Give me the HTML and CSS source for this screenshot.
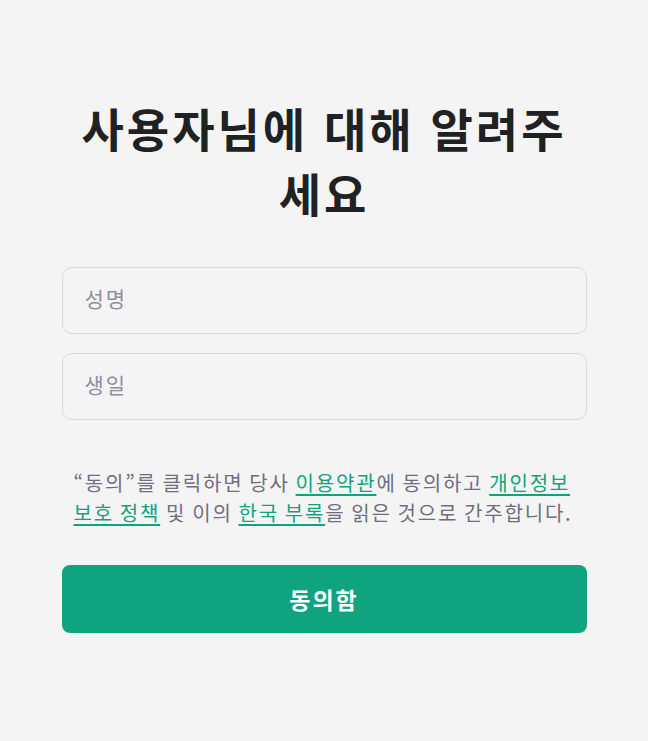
FILE: index.html
```html
<!DOCTYPE html>
<html lang="ko">
<head>
    <meta charset="UTF-8">
    <meta name="viewport" content="width=device-width, initial-scale=1.0">
    <title>사용자님에 대해 알려주세요</title>
    <link rel="stylesheet" href="styles.css">
</head>
<body>
    <div class="container">
        <h1 class="title">사용자님에 대해 알려주세요</h1>
        <form class="form">
            <input class="field" type="text" placeholder="성명">
            <input class="field" type="text" placeholder="생일">
            <p class="terms">
                “동의”를 클릭하면 당사 <a href="#">이용약관</a>에 동의하고 <a href="#">개인정보 보호 정책</a> 및 이의 <a href="#">한국 부록</a>을 읽은 것으로 간주합니다.
            </p>
            <button class="submit" type="button">동의함</button>
        </form>
    </div>
</body>
</html>
```

FILE: styles.css
```css
body {
    margin: 0;
    background-color: #f4f4f4;
    font-family: "Noto Sans CJK KR", "Noto Sans", sans-serif;
    color: #202123;
}
.container {
    width: 525px;
    margin: 0 auto;
    padding-top: 95px;
}
.title {
    margin: 0 0 42px;
    text-align: center;
    font-size: 46px;
    line-height: 65px;
    font-weight: 700;
    letter-spacing: 3px;
}
.form {
    display: flex;
    flex-direction: column;
}
.field {
    height: 67px;
    margin-bottom: 19px;
    padding: 0 21px 5px 22px;
    box-sizing: border-box;
    border: 1px solid #d9d9e3;
    border-radius: 10px;
    background: transparent;
    font-family: inherit;
    font-size: 21px;
    letter-spacing: 2px;
    color: #202123;
}
.field::placeholder {
    color: #8e8ea0;
}
.terms {
    margin: 29px 0 37px;
    padding: 0 6px 0 12px;
    font-size: 20px;
    line-height: 30px;
    letter-spacing: 1.8px;
    word-spacing: -1.5px;
    color: #6e6e80;
}
.terms a {
    color: #10a37f;
    text-decoration-thickness: 2px;
    text-underline-offset: 3px;
}
.submit {
    height: 68px;
    border: none;
    border-radius: 8px;
    background-color: #10a37f;
    color: #fff;
    font-family: inherit;
    font-size: 23px;
    font-weight: 700;
    letter-spacing: 2px;
    cursor: pointer;
}
```
